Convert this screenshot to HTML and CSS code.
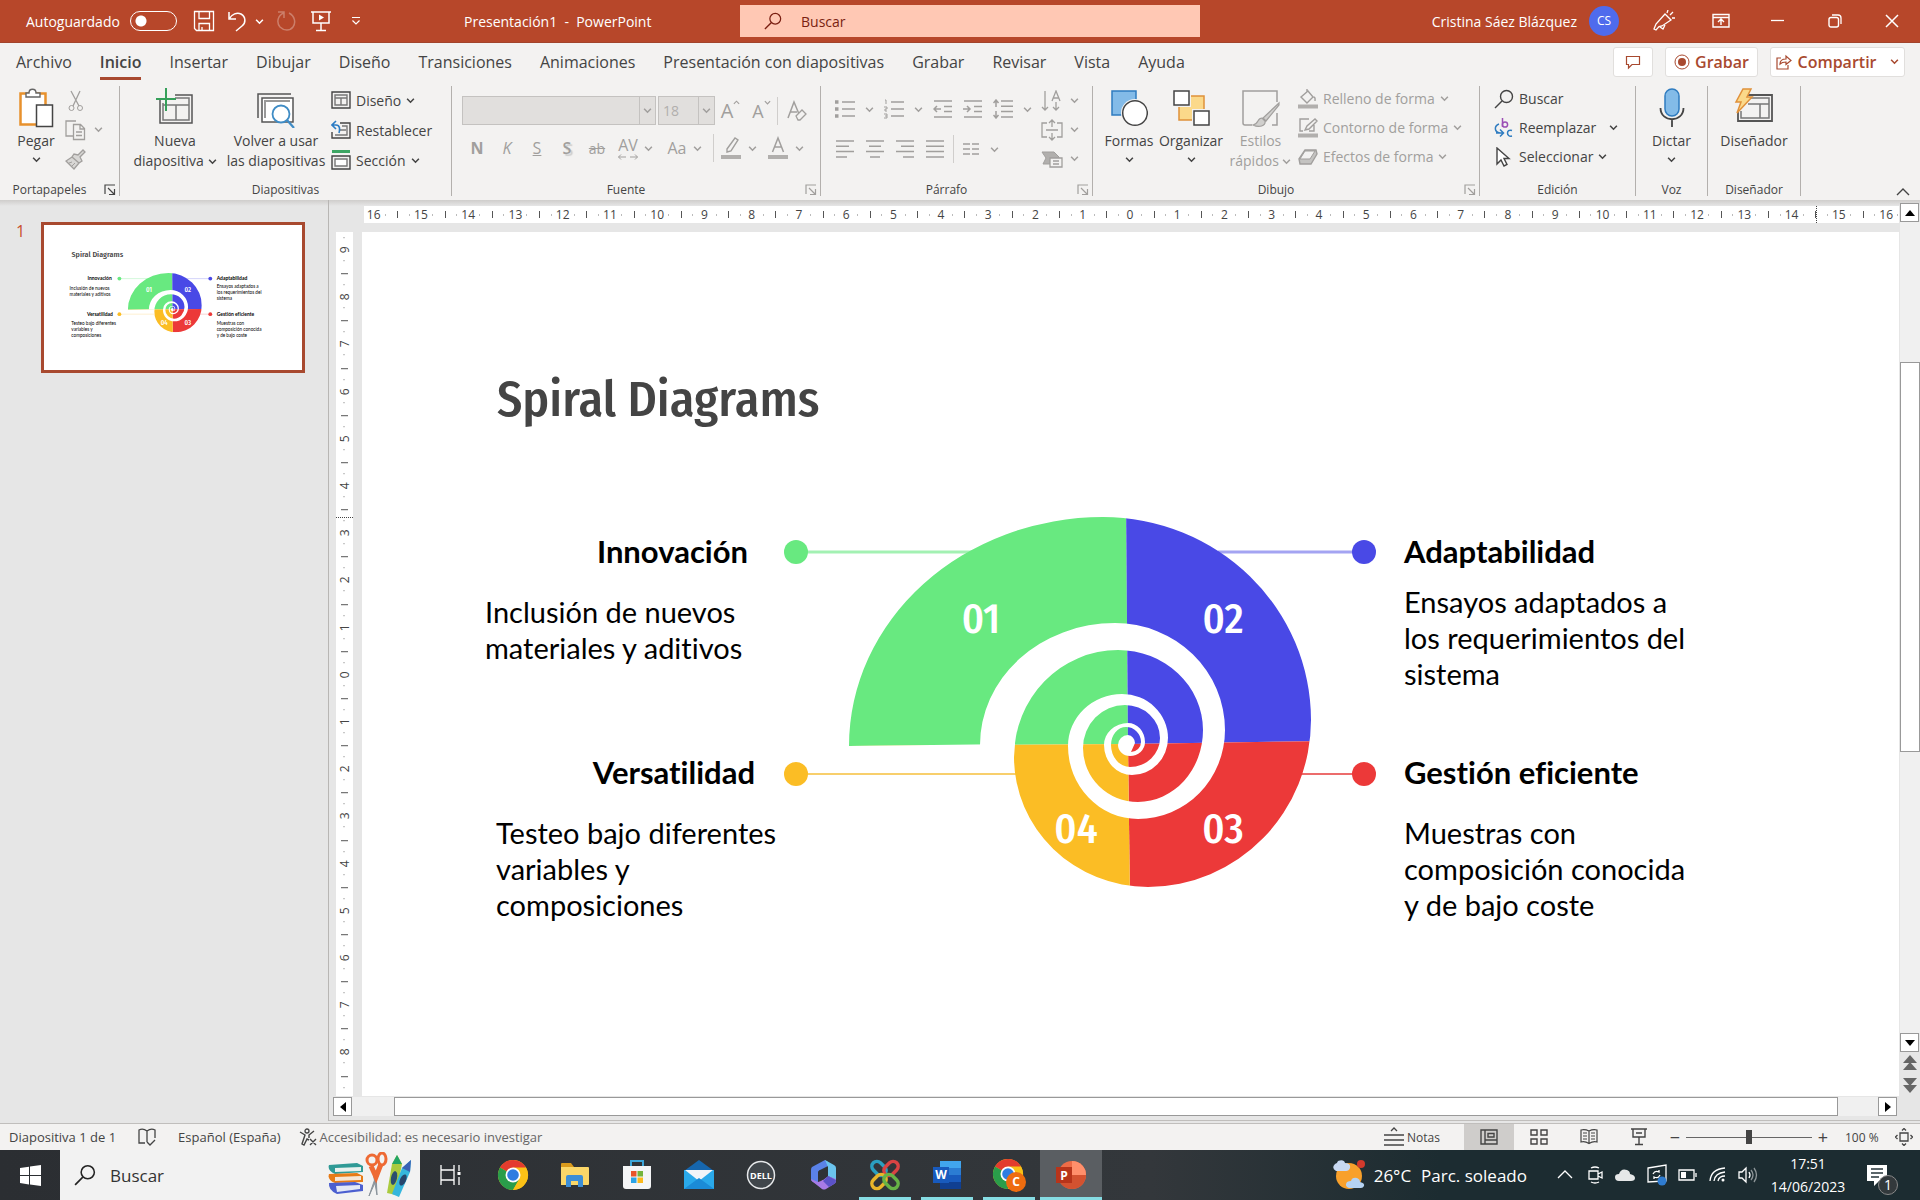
FILE: index.html
```
<!DOCTYPE html>
<html lang="es">
<head>
  <meta charset="UTF-8">
  <meta name="viewport" content="width=device-width, initial-scale=1.0">
  <title>Presentación1 - PowerPoint</title>
  <link rel="stylesheet" href="styles.css">
</head>
<body>
  <!-- Shared icons -->
  <svg class="defs" width="0" height="0">
    <symbol id="chev" viewBox="0 0 8 8"><path d="M1 2.5l3 3 3-3" fill="none" stroke="currentColor" stroke-width="1.4"/></symbol>
    <symbol id="launcher" viewBox="0 0 12 12"><path d="M1 10V1h10M4 4l6 6M10.5 5v5.5H5" fill="none" stroke="currentColor" stroke-width="1.2"/></symbol>
    <symbol id="lens" viewBox="0 0 20 20"><circle cx="12.5" cy="7.5" r="6" fill="none" stroke="currentColor" stroke-width="1.4"/><path d="M8 12l-7 7" stroke="currentColor" stroke-width="1.5"/></symbol>
    <symbol id="chrome" viewBox="0 0 32 32">
      <circle cx="16" cy="16" r="15" fill="#fbc116"/>
      <path d="M16 16L3 8.5A15 15 0 0 1 29 8.5z" fill="#e33b2e"/>
      <path d="M3 8.5A15 15 0 0 0 16 31l6.5-11.3L16 16z" fill="#2a9d4a"/>
      <path d="M16 8.5h13A15 15 0 0 1 16 31l6.5-11.3z" fill="#fbc116"/>
      <circle cx="16" cy="16" r="7.5" fill="#fff"/><circle cx="16" cy="16" r="5.8" fill="#2f7de1"/>
    </symbol>
  </svg>

  <!-- Title bar -->
  <header class="titlebar">
    <label class="autosave">Autoguardado <input type="checkbox"></label>
    <button class="qat save" aria-label="Guardar"><svg width="22" height="22" viewBox="0 0 22 22"><path d="M1.5 1.5h19v19h-17l-2-2zM6 1.5v7h10.5v-7M6 20.5v-7h10.5v7M9 17v3.5" fill="none" stroke="currentColor" stroke-width="1.3"/></svg></button>
    <button class="qat undo" aria-label="Deshacer"><svg width="20" height="22" viewBox="0 0 20 22"><path d="M2 2v7h7M2 9C5 4 10 2 14 4c5 3 5 9 1 12l-6 5" fill="none" stroke="currentColor" stroke-width="1.5"/></svg></button>
    <button class="qat undo-list" aria-label="Más acciones"><svg width="9" height="9"><use href="#chev"/></svg></button>
    <button class="qat redo" aria-label="Rehacer"><svg width="20" height="22" viewBox="0 0 20 22"><path d="M2 2h6v6M8 3c-6 2-8 9-4 14 4 4 10 4 13 0s2-11-4-14" fill="none" stroke="currentColor" stroke-width="1.5"/></svg></button>
    <button class="qat show" aria-label="Presentar"><svg width="20" height="22" viewBox="0 0 20 22"><path d="M0 2h20M2 2v11h16V2M10 13v7M5 20.5h10" fill="none" stroke="currentColor" stroke-width="1.5"/><path d="M8 4.5l5 3-5 3z" fill="currentColor"/></svg></button>
    <button class="qat more" aria-label="Personalizar"><svg width="10" height="10" viewBox="0 0 10 10"><path d="M1 1.5h8M1.5 4.5L5 8l3.5-3.5" fill="none" stroke="currentColor" stroke-width="1.2"/></svg></button>
    <span class="doc-title">Presentación1&nbsp; -&nbsp; PowerPoint</span>
    <label class="search"><svg width="18" height="18"><use href="#lens"/></svg><input type="text" placeholder="Buscar" aria-label="Buscar"></label>
    <div class="account">
      <span>Cristina Sáez Blázquez</span>
      <span class="avatar">CS</span>
    </div>
    <div class="window-buttons">
      <button aria-label="Novedades"><svg width="22" height="22" viewBox="0 0 22 22"><path d="M12 4l6 6-9 6-3 .5L3 20l-2-1 2-5zM7 17l3 2 2-4M14 3l1-3M17 5l3-3M19 8h3" fill="none" stroke="currentColor" stroke-width="1.3"/></svg></button>
      <button aria-label="Opciones de la cinta"><svg width="18" height="16" viewBox="0 0 18 16"><path d="M1 1.5h16V14H1zM1 4.5h16M9 12V6.5M6 9l3-3 3 3" fill="none" stroke="currentColor" stroke-width="1.4"/></svg></button>
      <button aria-label="Minimizar"><svg width="14" height="14" viewBox="0 0 14 14"><path d="M0 6.5h13" stroke="currentColor" stroke-width="1.3"/></svg></button>
      <button aria-label="Restaurar"><svg width="14" height="14" viewBox="0 0 14 14"><rect x="1" y="3.5" width="9.5" height="9.5" rx="2" fill="none" stroke="currentColor" stroke-width="1.4"/><path d="M4 1h6q3 0 3 3v6" fill="none" stroke="currentColor" stroke-width="1.3"/></svg></button>
      <button aria-label="Cerrar"><svg width="14" height="14" viewBox="0 0 14 14"><path d="M1 1l12 12M13 1L1 13" stroke="currentColor" stroke-width="1.5"/></svg></button>
    </div>
  </header>

  <!-- Tabs -->
  <nav class="tabs">
    <a href="#">Archivo</a>
    <a href="#" class="active">Inicio</a>
    <a href="#">Insertar</a>
    <a href="#">Dibujar</a>
    <a href="#">Diseño</a>
    <a href="#">Transiciones</a>
    <a href="#">Animaciones</a>
    <a href="#">Presentación con diapositivas</a>
    <a href="#">Grabar</a>
    <a href="#">Revisar</a>
    <a href="#">Vista</a>
    <a href="#">Ayuda</a>
    <div class="tab-buttons">
      <button class="comment" aria-label="Comentarios"><svg width="16" height="16" viewBox="0 0 16 16"><path d="M1.5 2.5h13v8H7L3.5 14v-3.5h-2z" fill="none" stroke="currentColor" stroke-width="1.2"/></svg></button>
      <button class="record"><svg width="16" height="16" viewBox="0 0 16 16"><circle cx="8" cy="8" r="7" fill="none" stroke="currentColor"/><circle cx="8" cy="8" r="4" fill="currentColor"/></svg>Grabar</button>
      <button class="share"><svg width="16" height="16" viewBox="0 0 16 16"><path d="M5 4H1v11h11v-4M4 10c0-4 3-5 6-5V2l5 4.5-5 4V8c-3 0-4 0-6 2z" fill="none" stroke="currentColor" stroke-width="1.2"/></svg>Compartir<svg class="share-arrow" width="9" height="9"><use href="#chev"/></svg></button>
    </div>
  </nav>

  <!-- Ribbon -->
  <section class="ribbon">
    <div class="group g-clip">
      <div class="tools">
        <button class="big paste"><svg width="36" height="40" viewBox="0 0 36 40"><path d="M2.5 5.5h25v31h-25z" fill="#fff" stroke="#e8912d" stroke-width="2.5"/><path d="M8 8V5h3c0-5 7-5 7 0h4v4H8z" fill="#fff" stroke="#666" stroke-width="1.4"/><path d="M18.5 17h16v21.5h-16z" fill="#fff" stroke="#444" stroke-width="1.5"/></svg><span>Pegar</span><svg width="9" height="9"><use href="#chev"/></svg></button>
        <div class="stack off">
          <button aria-label="Cortar"><svg width="22" height="22" viewBox="0 0 22 22"><path d="M6 1l8 15M15 1L8 16" stroke="currentColor" stroke-width="1.3"/><circle cx="6.5" cy="18" r="2.5" fill="none" stroke="currentColor"/><circle cx="15" cy="18" r="2.5" fill="none" stroke="currentColor"/></svg></button>
          <button aria-label="Copiar"><svg width="22" height="22" viewBox="0 0 22 22"><path d="M8 17H1V2h10M8.5 5.5h7l4 4v11h-11zM15 6v4h4M11 13h6M11 16.5h6" fill="none" stroke="currentColor" stroke-width="1.3"/></svg><svg width="9" height="9"><use href="#chev"/></svg></button>
          <button aria-label="Copiar formato"><svg width="22" height="22" viewBox="0 0 22 22"><path d="M13 7l5-5 2 2-5 5 2 4-3 2-7-6 2-3zM7 9l7 6-5 6-8-8z" fill="#d8d7d5" stroke="currentColor" stroke-width="1.3"/><path d="M4 15l3-1M7 18l3-3" stroke="currentColor"/></svg></button>
        </div>
      </div>
      <div class="group-name">Portapapeles<svg width="12" height="12"><use href="#launcher"/></svg></div>
    </div>

    <div class="group g-slides">
      <div class="tools">
        <button class="big new-slide"><svg width="40" height="40" viewBox="0 0 40 40"><path d="M5 12v23h32V7H20" fill="none" stroke="#555" stroke-width="1.5"/><path d="M8 15v17h26V10H20M8 17h26M21 17v15" fill="none" stroke="#777" stroke-width="1.5"/><path d="M11 0v23M1 11h20" stroke="#35a05a" stroke-width="2"/></svg><span>Nueva<br>diapositiva <svg width="9" height="9"><use href="#chev"/></svg></span></button>
        <button class="big reuse"><svg width="40" height="40" viewBox="0 0 40 40"><path d="M2 30V6h33" fill="none" stroke="#555" stroke-width="1.5"/><path d="M6 34V10h31v24z" fill="#fff" stroke="#555" stroke-width="1.5"/><path d="M9 30V13h25" fill="none" stroke="#999" stroke-width="2"/><circle cx="25" cy="26" r="8.5" fill="#fff" stroke="#3f8cc5" stroke-width="1.8"/><path d="M31 32l7 8" stroke="#3f8cc5" stroke-width="2.2"/></svg><span>Volver a usar<br>las diapositivas</span></button>
        <div class="rows">
          <button><svg width="20" height="20" viewBox="0 0 20 20"><path d="M1 2h18v16H1z" fill="none" stroke="#444" stroke-width="1.4"/><path d="M4 5h12v10H4zM4 8h12M10 8v7" fill="none" stroke="#777" stroke-width="1.4"/></svg>Diseño <svg width="9" height="9"><use href="#chev"/></svg></button>
          <button><svg width="20" height="20" viewBox="0 0 20 20"><path d="M9 3h10v15H1v-6" fill="none" stroke="#444" stroke-width="1.4"/><path d="M11 6h5v9H4M9 10h6" fill="none" stroke="#777" stroke-width="1.4"/><path d="M5 1L1 5l4 4M1 5h4c4 0 4 4 3 8" fill="none" stroke="#2b7cc4" stroke-width="1.6"/></svg>Restablecer</button>
          <button><svg width="20" height="20" viewBox="0 0 20 20"><path d="M1 1.5h18" stroke="#3da563" stroke-width="3"/><path d="M1 6h18v13H1z" fill="none" stroke="#444" stroke-width="1.4"/><path d="M4 9h12v7H4z" fill="#fff" stroke="#777" stroke-width="1.4"/></svg>Sección <svg width="9" height="9"><use href="#chev"/></svg></button>
        </div>
      </div>
      <div class="group-name">Diapositivas</div>
    </div>

    <div class="group g-font off">
      <div class="tools">
        <div class="font-row one">
          <span class="combo wide"><select aria-label="Fuente" disabled><option></option></select><svg width="9" height="9"><use href="#chev"/></svg></span>
          <span class="combo"><select aria-label="Tamaño" disabled><option>18</option></select><svg width="9" height="9"><use href="#chev"/></svg></span>
          <button aria-label="Aumentar tamaño" class="grow">A<svg width="7" height="7" viewBox="0 0 8 8"><path d="M1 5.5l3-3 3 3" fill="none" stroke="currentColor" stroke-width="1.3"/></svg></button>
          <button aria-label="Disminuir tamaño" class="shrink">A<svg width="7" height="7"><use href="#chev"/></svg></button>
          <i class="bar"></i>
          <button aria-label="Borrar formato"><svg width="22" height="22" viewBox="0 0 22 22"><path d="M2 18L8 2l5 12M4 12h7" fill="none" stroke="currentColor" stroke-width="1.5"/><path d="M10 16l6-6 4 4-6 6h-2z" fill="#f3f2f1" stroke="currentColor" stroke-width="1.3"/></svg></button>
        </div>
        <div class="font-row two">
          <button><b>N</b></button>
          <button><em>K</em></button>
          <button><u>S</u></button>
          <button class="shadowed">S</button>
          <button class="small"><s>ab</s></button>
          <button aria-label="Espaciado" class="spacing">AV<svg width="20" height="6" viewBox="0 0 20 6"><path d="M3 .5L.5 3 3 5.5M.5 3H8M17 .5L19.5 3 17 5.5M19.5 3H12" fill="none" stroke="currentColor"/></svg></button>
          <svg width="9" height="9"><use href="#chev"/></svg>
          <button class="case">Aa</button>
          <svg width="9" height="9"><use href="#chev"/></svg>
          <i class="bar"></i>
          <button class="ink" aria-label="Resaltado"><svg width="20" height="24" viewBox="0 0 20 24"><path d="M6 13l8-11 3 2-7 11-4 1z" fill="none" stroke="currentColor" stroke-width="1.4"/><path d="M0 19h20v4H0z" fill="#b1afad"/></svg></button>
          <svg width="9" height="9"><use href="#chev"/></svg>
          <button class="ink" aria-label="Color de fuente"><svg width="20" height="24" viewBox="0 0 20 24"><path d="M4.5 16L10 2l5.5 14M6.5 11h7" fill="none" stroke="currentColor" stroke-width="1.5"/><path d="M0 19h20v4H0z" fill="#b1afad"/></svg></button>
          <svg width="9" height="9"><use href="#chev"/></svg>
        </div>
      </div>
      <div class="group-name">Fuente<svg width="12" height="12"><use href="#launcher"/></svg></div>
    </div>

    <div class="group g-par off">
      <div class="tools">
        <div class="par-main">
          <div class="par-row one">
            <button aria-label="Viñetas"><svg width="20" height="20" viewBox="0 0 20 20"><path d="M7 3h13M7 10h13M7 17h13" stroke="currentColor" stroke-width="1.5"/><path d="M0 3h3.5M0 10h3.5M0 17h3.5" stroke="currentColor" stroke-width="3.5"/></svg></button>
            <svg width="9" height="9"><use href="#chev"/></svg>
            <button aria-label="Numeración"><svg width="20" height="20" viewBox="0 0 20 20"><path d="M7 3h13M7 10h13M7 17h13" stroke="currentColor" stroke-width="1.5"/><path d="M1 1h1v4M0 8h3v2H1v2h2M0 15h3v4H0M1 17h2" fill="none" stroke="currentColor"/></svg></button>
            <svg width="9" height="9"><use href="#chev"/></svg>
            <button aria-label="Disminuir sangría"><svg width="20" height="20" viewBox="0 0 20 20"><path d="M1 2h18M11 7.5h8M11 12.5h8M1 18h18M8 10H1M4 7l-3 3 3 3" fill="none" stroke="currentColor" stroke-width="1.5"/></svg></button>
            <button aria-label="Aumentar sangría"><svg width="20" height="20" viewBox="0 0 20 20"><path d="M1 2h18M11 7.5h8M11 12.5h8M1 18h18M0 10h7M4 7l3 3-3 3" fill="none" stroke="currentColor" stroke-width="1.5"/></svg></button>
            <button aria-label="Interlineado"><svg width="20" height="20" viewBox="0 0 20 20"><path d="M8 2h12M8 7.3h12M8 12.6h12M8 18h12M3 1v7M.5 4L3 1l2.5 3M3 19v-7M.5 16L3 19l2.5-3" fill="none" stroke="currentColor" stroke-width="1.5"/></svg></button>
            <svg width="9" height="9"><use href="#chev"/></svg>
          </div>
          <div class="par-row two">
            <button aria-label="Izquierda"><svg width="20" height="20" viewBox="0 0 20 20"><path d="M1 2h18M1 7.3h13M1 12.6h18M1 18h11" stroke="currentColor" stroke-width="1.5"/></svg></button>
            <button aria-label="Centrar"><svg width="20" height="20" viewBox="0 0 20 20"><path d="M1 2h18M4 7.3h12M1 12.6h18M5 18h10" stroke="currentColor" stroke-width="1.5"/></svg></button>
            <button aria-label="Derecha"><svg width="20" height="20" viewBox="0 0 20 20"><path d="M1 2h18M6 7.3h13M1 12.6h18M8 18h11" stroke="currentColor" stroke-width="1.5"/></svg></button>
            <button aria-label="Justificar"><svg width="20" height="20" viewBox="0 0 20 20"><path d="M1 2h18M1 7.3h18M1 12.6h18M1 18h18" stroke="currentColor" stroke-width="1.5"/></svg></button>
            <i class="bar"></i>
            <button aria-label="Columnas"><svg width="18" height="14" viewBox="0 0 18 14"><path d="M1 2h7M1 7h7M1 12h7M10 2h7M10 7h7M10 12h7" stroke="currentColor" stroke-width="1.3"/></svg></button>
            <svg width="9" height="9"><use href="#chev"/></svg>
          </div>
        </div>
        <div class="stack">
          <button aria-label="Dirección del texto"><svg width="22" height="22" viewBox="0 0 22 22"><path d="M4 1v19M1 17l3 3 3-3M15 12v8M12 17l3 3 3-3M11 11l4-10 4 10M12.5 8h5" fill="none" stroke="currentColor" stroke-width="1.3"/></svg><svg width="9" height="9"><use href="#chev"/></svg></button>
          <button aria-label="Alinear texto"><svg width="22" height="22" viewBox="0 0 22 22"><path d="M6 4H1v14h5M16 4h5v14h-5M5 11h12M11 1v7M8 4l3-3 3 3M11 21v-7M8 18l3 3 3-3" fill="none" stroke="currentColor" stroke-width="1.3"/></svg><svg width="9" height="9"><use href="#chev"/></svg></button>
          <button aria-label="SmartArt"><svg width="22" height="22" viewBox="0 0 22 22"><path d="M1 4h12l5 5v3H9v4H2l3-6z" fill="#b1afad" stroke="currentColor"/><path d="M9 10h12v9H9zM12 13h6M12 16h6" fill="#f3f2f1" stroke="currentColor" stroke-width="1.3"/></svg><svg width="9" height="9"><use href="#chev"/></svg></button>
        </div>
      </div>
      <div class="group-name">Párrafo<svg width="12" height="12"><use href="#launcher"/></svg></div>
    </div>

    <div class="group g-draw">
      <div class="tools">
        <button class="big shapes"><svg width="38" height="40" viewBox="0 0 38 40"><path d="M2 3h24v24H2z" fill="#83bbe8" stroke="#2f7cc0" stroke-width="1.5"/><circle cx="25" cy="25" r="14" fill="#f3f2f1"/><circle cx="25" cy="25" r="12.3" fill="#fff" stroke="#444" stroke-width="1.5"/></svg><span>Formas</span><svg width="9" height="9"><use href="#chev"/></svg></button>
        <button class="big arrange"><svg width="38" height="40" viewBox="0 0 38 40"><path d="M7 8h25v24H7z" fill="#fbd98a" stroke="#e0913a" stroke-width="1.5"/><path d="M2 3h15v14H2zM22 23h15v14H22z" fill="#fff" stroke="#f3f2f1" stroke-width="4"/><path d="M2 3h15v14H2zM22 23h15v14H22z" fill="#fff" stroke="#444" stroke-width="1.5"/></svg><span>Organizar</span><svg width="9" height="9"><use href="#chev"/></svg></button>
        <button class="big quick off"><svg width="38" height="40" viewBox="0 0 38 40"><path d="M10 37H3q-2 0-2-2V3h34v11M35 25v12h-5" fill="none" stroke="currentColor" stroke-width="1.5"/><path d="M37 15L21 30l3 3 13-16zM20 30c-5 0-3 6-9 7 6 3 13 1 12-4z" fill="#d0cfcd" stroke="currentColor" stroke-width="1.2"/></svg><span>Estilos<br>rápidos <svg width="9" height="9"><use href="#chev"/></svg></span></button>
        <div class="rows tight off">
          <button><svg width="20" height="20" viewBox="0 0 20 20"><path d="M3 8l7-6 5 6-6 6zM9 4V0M14 8c4-1 3 3 3 4" fill="none" stroke="currentColor" stroke-width="1.4"/><path d="M0 15.5h20v4H0z" fill="#b1afad"/></svg>Relleno de forma <svg width="9" height="9"><use href="#chev"/></svg></button>
          <button><svg width="20" height="20" viewBox="0 0 20 20"><path d="M11 1H2v12h3M16 7v6h-5M7 12l2-4 8-7 2 2-8 8z" fill="none" stroke="currentColor" stroke-width="1.4"/><path d="M0 15.5h20v4H0z" fill="#b1afad"/></svg>Contorno de forma <svg width="9" height="9"><use href="#chev"/></svg></button>
          <button><svg width="20" height="20" viewBox="0 0 20 20"><path d="M1 12L7 3h11l1 4-6 10H2z" fill="#c4c3c1" stroke="currentColor" stroke-width="1.4"/><path d="M7 4h10l-5 8H2z" fill="#f3f2f1" stroke="currentColor"/></svg>Efectos de forma <svg width="9" height="9"><use href="#chev"/></svg></button>
        </div>
      </div>
      <div class="group-name">Dibujo<svg class="off" width="12" height="12"><use href="#launcher"/></svg></div>
    </div>

    <div class="group g-edit">
      <div class="tools">
        <div class="rows tight">
          <button><svg width="20" height="20"><use href="#lens"/></svg>Buscar</button>
          <button><svg width="20" height="20" viewBox="0 0 20 20"><path d="M8.5 0v9" stroke="#9b4fb5" stroke-width="1.5"/><circle cx="11" cy="6.5" r="2.6" fill="none" stroke="#9b4fb5" stroke-width="1.5"/><path d="M18 12.5c-6-2-6 7 0 5.5M5 6c-5 2-5 8 1 9M2 15h7M6 11.5l3.5 3.5L6 18.5" fill="none" stroke="#2f7cc0" stroke-width="1.5"/></svg><span class="replace">Reemplazar</span> <svg width="9" height="9"><use href="#chev"/></svg></button>
          <button><svg width="20" height="20" viewBox="0 0 20 20"><path d="M3 1v16l4-4 3 6 3-1.5-3-6h5z" fill="#fff" stroke="#444" stroke-width="1.4"/></svg>Seleccionar <svg width="9" height="9"><use href="#chev"/></svg></button>
        </div>
      </div>
      <div class="group-name">Edición</div>
    </div>

    <div class="group g-voice">
      <div class="tools">
        <button class="big"><svg width="26" height="40" viewBox="0 0 26 40"><rect x="6" y="1" width="14" height="27" rx="7" fill="#83bbe8" stroke="#2f7cc0" stroke-width="1.5"/><path d="M1.5 20c0 15 23 15 23 0M13 32v7" fill="none" stroke="#444" stroke-width="1.8"/></svg><span>Dictar</span><svg width="9" height="9"><use href="#chev"/></svg></button>
      </div>
      <div class="group-name">Voz</div>
    </div>

    <div class="group g-designer">
      <div class="tools">
        <button class="big"><svg width="40" height="40" viewBox="0 0 40 40"><path d="M14 7h24v26H4v-9" fill="none" stroke="#555" stroke-width="1.8"/><path d="M14 10h21v20H7v-7M14 16h21M26 16v14" fill="none" stroke="#777" stroke-width="1.5"/><path d="M9 1h8l-4 8h5L3 25l4-11H2z" fill="#fbd98a" stroke="#e0913a" stroke-width="1.5"/></svg><span>Diseñador</span></button>
      </div>
      <div class="group-name">Diseñador</div>
    </div>
    <button class="collapse" aria-label="Contraer la cinta"><svg width="14" height="8" viewBox="0 0 14 8"><path d="M1 7l6-6 6 6" fill="none" stroke="#444" stroke-width="1.4"/></svg></button>
  </section>

  <!-- Workspace -->
  <main class="workspace">
    <aside class="slide-list">
      <span class="slide-number">1</span>
      <a href="#deck" class="thumb" aria-label="Diapositiva 1"><svg viewBox="325 217 1612 906"><use href="#slide"/></svg></a>
    </aside>

    <section class="editor">
      <div class="ruler-h"><div class="marks" id="rulerH"></div><i class="pointer"></i></div>
      <div class="ruler-v"><div class="marks" id="rulerV"></div><i class="pointer"></i></div>
      <div class="deck" id="deck">
        <svg viewBox="362 232 1537 864" preserveAspectRatio="xMinYMin slice">
          <g id="slide">
            <text class="s-title" x="497" y="416">Spiral Diagrams</text>
            <!-- connectors -->
            <path d="M795 552h180" stroke="#a3f1b3" stroke-width="3"/>
            <path d="M1218 552h146" stroke="#a4a4f2" stroke-width="3"/>
            <path d="M795 774h222" stroke="#f8cf6c" stroke-width="2"/>
            <path d="M1300 774h64" stroke="#ec6c6c" stroke-width="2"/>
            <circle cx="796" cy="552" r="12" fill="#68e980"/>
            <circle cx="1364" cy="552" r="12" fill="#4949e6"/>
            <circle cx="796" cy="774" r="12" fill="#fbbd25"/>
            <circle cx="1364" cy="774" r="12" fill="#ec3939"/>
            <!-- shell, split in four quadrants -->
            <clipPath id="shell"><path d="M849 746A254 229 0 0 1 1103 517A208 203 0 0 1 1311 720A163 167 0 0 1 1148 887A134 130 0 0 1 1014 757L1015 744z"/></clipPath>
            <g clip-path="url(#shell)">
              <path d="M840 500h286l2 244-288 2z" fill="#68e980"/>
              <path d="M1126 500h200v241l-198 3z" fill="#4949e6"/>
              <path d="M1128 744l198-3v160h-196z" fill="#ec3939"/>
              <path d="M1128 744l2 157h-290V746z" fill="#fbbd25"/>
            </g>
            <!-- white spiral band -->
            <path fill="#fff" d="M980 746A135 122 0 0 1 1115 623A110 107 0 0 1 1225 730A87 89 0 0 1 1138 819A70 73 0 0 1 1068 746A54 52 0 0 1 1122 694A46 44 0 0 1 1168 738A36 37 0 0 1 1132 775A28 30 0 0 1 1104 745A24 22 0 0 1 1128 723A17 19 0 0 1 1145 742A15 14 0 0 1 1130 756A12 11 0 0 1 1118 745A10 10 0 0 1 1128 735A8 8 0 0 1 1135 743L1131 752A10 10 0 0 0 1141 742A15 15 0 0 0 1126 727A15 18 0 0 0 1111 745A19 22 0 0 0 1130 767A30 29 0 0 0 1160 738A35 33 0 0 0 1125 705A42 43 0 0 0 1083 748A55 54 0 0 0 1138 802A65 72 0 0 0 1203 730A85 80 0 0 0 1118 650A104 107 0 0 0 1014 757V780H980z" clip-path="url(#band)"/>
            <clipPath id="band"><path d="M970 600h340v300h-295V745h-45z"/></clipPath>
            <text class="s-num" x="981" y="633">01</text>
            <text class="s-num" x="1223" y="633">02</text>
            <text class="s-num" x="1223" y="843">03</text>
            <text class="s-num" x="1076" y="843">04</text>
            <!-- captions -->
            <text class="s-head end" x="748" y="563">Innovación</text>
            <text class="s-text"><tspan x="485" y="623">Inclusión de nuevos</tspan><tspan x="485" y="659">materiales y aditivos</tspan></text>
            <text class="s-head" x="1404" y="563">Adaptabilidad</text>
            <text class="s-text"><tspan x="1404" y="613">Ensayos adaptados a</tspan><tspan x="1404" y="649">los requerimientos del</tspan><tspan x="1404" y="685">sistema</tspan></text>
            <text class="s-head end" x="755" y="784">Versatilidad</text>
            <text class="s-text"><tspan x="496" y="844">Testeo bajo diferentes</tspan><tspan x="496" y="880">variables y</tspan><tspan x="496" y="916">composiciones</tspan></text>
            <text class="s-head" x="1404" y="784">Gestión eficiente</text>
            <text class="s-text"><tspan x="1404" y="844">Muestras con</tspan><tspan x="1404" y="880">composición conocida</tspan><tspan x="1404" y="916">y de bajo coste</tspan></text>
          </g>
        </svg>
      </div>
      <div class="scroll-v">
        <button aria-label="Subir"><svg width="10" height="6"><path d="M0 6l5-6 5 6z"/></svg></button>
        <div class="track"><div class="handle"></div></div>
        <button aria-label="Bajar"><svg width="10" height="6"><path d="M0 0l5 6 5-6z"/></svg></button>
        <button class="page" aria-label="Diapositiva anterior"><svg width="14" height="16" viewBox="0 0 14 16"><path d="M0 8l7-8 7 8zM0 15l7-8 7 8z" fill="#666"/></svg></button>
        <button class="page" aria-label="Diapositiva siguiente"><svg width="14" height="16" viewBox="0 0 14 16"><path d="M0 1l7 8 7-8zM0 8l7 8 7-8z" fill="#666"/></svg></button>
      </div>
      <div class="scroll-h">
        <button aria-label="Izquierda"><svg width="6" height="10"><path d="M6 0L0 5l6 5z"/></svg></button>
        <div class="track"><div class="handle"></div></div>
        <button aria-label="Derecha"><svg width="6" height="10"><path d="M0 0l6 5-6 5z"/></svg></button>
      </div>
    </section>
  </main>

  <!-- Status bar -->
  <section class="status">
    <span>Diapositiva 1 de 1</span>
    <svg class="book" width="18" height="18" viewBox="0 0 18 18"><path d="M9 3Q5 0 1 2v13h6M9 3q4-3 8-1v8M9 3v11M9 14l3 3 5-5" fill="none" stroke="#444" stroke-width="1.3"/></svg>
    <span>Español (España)</span>
    <svg class="access" width="18" height="18" viewBox="0 0 18 18"><circle cx="8" cy="3" r="2" fill="none" stroke="#444" stroke-width="1.3"/><path d="M1 4l5 3-3 9 2 1 3-6 2 1M15 3l-5 4v3M11 11l6 6M17 11l-6 6" fill="none" stroke="#444" stroke-width="1.4"/></svg>
    <span class="access-text">Accesibilidad: es necesario investigar</span>
    <div class="views">
      <button class="notes"><svg width="20" height="20" viewBox="0 0 20 20"><path d="M7 4l3-3 3 3M0 8h20M0 13h20M0 18h20" fill="none" stroke="#444" stroke-width="1.3"/></svg>Notas</button>
      <button class="view active" aria-label="Normal"><svg width="18" height="16" viewBox="0 0 18 16"><path d="M1 1h16v14H1zM5 1v14M5 11h12M8 4.5h6V8H8z" fill="none" stroke="#444" stroke-width="1.4"/></svg></button>
      <button class="view" aria-label="Clasificador"><svg width="18" height="16" viewBox="0 0 18 16"><path d="M1 1h6v5H1zM11 1h6v5h-6zM1 10h6v5H1zM11 10h6v5h-6z" fill="none" stroke="#444" stroke-width="1.4"/></svg></button>
      <button class="view" aria-label="Lectura"><svg width="18" height="16" viewBox="0 0 18 16"><path d="M9 2Q5 0 1 1v12q4-1 8 1.5Q13 12 17 13V1q-4-1-8 1zv13M3 4h4M3 7h4M3 10h4M11 4h4M11 7h4M11 10h4" fill="none" stroke="#444" stroke-width="1.2"/></svg></button>
      <button class="view" aria-label="Presentación"><svg width="18" height="18" viewBox="0 0 18 18"><path d="M1 1h16M3 1v8h12V1M9 9v7M5 16.5h8M6 5h6" fill="none" stroke="#444" stroke-width="1.4"/></svg></button>
      <button class="step" aria-label="Alejar">−</button>
      <input type="range" min="0" max="100" value="50" aria-label="Zoom">
      <button class="step" aria-label="Acercar">+</button>
      <span class="percent">100 %</span>
      <button class="fit" aria-label="Ajustar"><svg width="18" height="18" viewBox="0 0 18 18"><path d="M5 5h8v8H5zM7 2.5L9 .5l2 2M7 15.5l2 2 2-2M2.5 7L.5 9l2 2M15.5 7l2 2-2 2" fill="none" stroke="#444" stroke-width="1.3"/></svg></button>
    </div>
  </section>

  <!-- Taskbar -->
  <footer class="taskbar">
    <button class="start" aria-label="Inicio"><svg width="21" height="21" viewBox="0 0 21 21"><path d="M0 3l9-1.3V10H0zM10 1.5L21 0v10H10zM0 11h9v8.5L0 18zM10 11h11v10l-11-1.5z" fill="#fff"/></svg></button>
    <label class="task-search"><svg width="22" height="22"><use href="#lens"/></svg><input type="text" placeholder="Buscar" aria-label="Buscar en Windows">
      <svg class="art" width="84" height="46" viewBox="0 0 84 46">
        <path d="M1 13l28-2 6 3v6l-28 2q-8-4-6-9z" fill="#2f9a96"/><path d="M7 16l26-1v4l-26 1z" fill="#e9f1ee"/>
        <path d="M1 22l28-1 6 3v6l-28 1q-8-3-6-9z" fill="#e77b16"/><path d="M7 25l26-1v4l-26 1z" fill="#f7e7d6"/>
        <path d="M1 31l26-1 8 3v6l-26 3q-9-4-8-11z" fill="#4c5fd0"/><path d="M8 34l24-1v4l-23 3z" fill="#e4e9f6"/>
        <path d="M50 18L41 44l9-20zM45 20l4 23-1-22z" fill="#9aa3ab" stroke="#8a939b"/>
        <circle cx="44" cy="8" r="5" fill="none" stroke="#ee6a34" stroke-width="3"/><ellipse cx="54" cy="7" rx="4" ry="6" fill="none" stroke="#ee6a34" stroke-width="3"/>
        <path d="M43 14l5 11 5-13" fill="none" stroke="#ee6a34" stroke-width="5"/>
        <path d="M64 12l5-9 5 9-6 31-9-2z" fill="#aacb3e"/><path d="M64 12l5-9 5 9z" fill="#22a565"/><ellipse cx="66" cy="26" rx="3" ry="7" fill="#2b4d6e" transform="rotate(12 66 26)"/>
        <path d="M74 16l9-8-1 12-11 25-7-3z" fill="#35b6dd"/><path d="M74 16l9-8-1 12z" fill="#3a62b4"/><ellipse cx="75" cy="28" rx="3" ry="6" fill="#27456c" transform="rotate(25 75 28)"/>
      </svg>
    </label>
    <div class="apps">
      <button aria-label="Vista de tareas"><svg width="22" height="22" viewBox="0 0 22 22"><path d="M1 1v5h13V1M1 21v-5h13v5M1 6v10M14 6v10M19 1v6M19 13v8" fill="none" stroke="#fff" stroke-width="1.3"/><path d="M17.5 8h3v3h-3z" fill="#fff"/></svg></button>
      <button aria-label="Chrome"><svg width="32" height="32"><use href="#chrome"/></svg></button>
      <button aria-label="Explorador"><svg width="30" height="26" viewBox="0 0 30 26"><path d="M1 2q0-1 1-1h9l3 4H1z" fill="#d99a1c"/><path d="M1 5h27q1 0 1 1v16q0 1-1 1H1z" fill="#fbd768"/><path d="M6 25V15q0-2 2-2h13q2 0 2 2v10h-5v-6h-7v6z" fill="#3c8ed6"/></svg></button>
      <button aria-label="Store"><svg width="30" height="32" viewBox="0 0 30 32"><path d="M9 8V2h12v6" fill="none" stroke="#3ba5d8" stroke-width="2"/><path d="M1 7h28v20q0 3-3 3H4q-3 0-3-3z" fill="#f4f5f6"/><path d="M9 12h5.5v5.5H9z" fill="#e9542b"/><path d="M15.5 12H21v5.5h-5.5z" fill="#74b43b"/><path d="M9 18.5h5.5V24H9z" fill="#2ba3e6"/><path d="M15.5 18.5H21V24h-5.5z" fill="#fbb91c"/></svg></button>
      <button aria-label="Correo"><svg width="32" height="30" viewBox="0 0 32 30"><path d="M1 11L16 0l15 11z" fill="#1666ae"/><path d="M1 10h30v19H1z" fill="#2aa9ea"/><path d="M2 10h28L16 21z" fill="#f2f5f8"/><path d="M1 29l15-11 15 11z" fill="#1b8bd6"/></svg></button>
      <button aria-label="Dell"><svg width="30" height="30" viewBox="0 0 30 30"><circle cx="15" cy="15" r="13.5" fill="#40464b" stroke="#e6e8ea" stroke-width="1.5"/><text x="15" y="18.5" text-anchor="middle" class="dell">DELL</text></svg></button>
      <button aria-label="Microsoft 365"><svg width="30" height="32" viewBox="0 0 30 32"><path d="M17 1L4 8q-1 1-1 3v9q0 2 2 3l5 2V14q0-2 2-3l8-4V3z" fill="#5a82e8"/><path d="M17 1l9 5q2 1 2 3v12l-8-4V8z" fill="#6bc4ee"/><path d="M3 20q0 2 2 3l9 7q2 1 4 0l8-5q2-1 2-3v-2l-8-3-7 5-3 1z" fill="#a77be6"/><path d="M20 17l8 4q0 3-2 4l-5 3-6-6z" fill="#5b53c8"/><path d="M15 11l5-3v9l-5 4-5-2v-5q0-2 2-3z" fill="#2e3236"/></svg></button>
      <button class="open" aria-label="Anillos"><svg width="32" height="32" viewBox="0 0 32 32" fill="none" stroke-width="3.5"><rect x="5" y="1.5" width="10" height="16" rx="5" stroke="#2b9fbf" transform="rotate(-45 10 9.5)"/><rect x="17" y="1.5" width="10" height="16" rx="5" stroke="#d94343" transform="rotate(45 22 9.5)"/><rect x="5" y="14.5" width="10" height="16" rx="5" stroke="#e9b62a" transform="rotate(45 10 22.5)"/><rect x="17" y="14.5" width="10" height="16" rx="5" stroke="#67b346" transform="rotate(-45 22 22.5)"/></svg></button>
      <button class="open" aria-label="Word"><svg width="30" height="30" viewBox="0 0 30 30"><path d="M8 1h21v28H8z" fill="#2b7cd3"/><path d="M8 1h21v7H8z" fill="#41a5ee"/><path d="M8 15h21v7H8z" fill="#185abd"/><path d="M8 22h21v7H8z" fill="#103f91"/><path d="M1 7h16v16H1z" fill="#185abd"/><text x="9" y="19" text-anchor="middle" class="letter">W</text></svg></button>
      <button class="open" aria-label="Chrome, perfil C"><svg width="34" height="34" viewBox="0 0 34 34"><use href="#chrome" width="32" height="32"/><circle cx="24" cy="24" r="10" fill="#ee6c0f"/><text x="24" y="28" text-anchor="middle" class="letter">C</text></svg></button>
      <button class="open current" aria-label="PowerPoint"><svg width="32" height="30" viewBox="0 0 32 30"><circle cx="17" cy="15" r="14" fill="#ed6c47"/><path d="M17 1a14 14 0 0 1 14 14H17z" fill="#ff8f6b"/><path d="M31 15a14 14 0 0 1-28 0z" fill="#d35230"/><path d="M1 7h16v16H1z" fill="#b7341a"/><text x="9" y="20" text-anchor="middle" class="letter">P</text></svg></button>
    </div>
    <div class="weather"><svg width="34" height="32" viewBox="0 0 34 32"><circle cx="17" cy="17" r="13" fill="#f8a02b"/><circle cx="29" cy="5" r="4" fill="#d23a2c"/><path d="M4 12q-5-3-1-7 2 0 3-3 6-2 7 2 6 0 5 5-1 3-4 3z" fill="#c9d9f2"/><path d="M17 29q-5-2-2-6 2-1 4-1 1-4 6-3 3 1 3 4 5 1 4 4-1 2-3 2z" fill="#b5d2f2"/></svg><span>26°C</span><span>Parc. soleado</span></div>
    <div class="tray">
      <svg width="18" height="18" viewBox="0 0 18 18"><path d="M2 12l7-7 7 7"/></svg>
      <svg width="18" height="18" viewBox="0 0 18 18"><path d="M6 2q4-2 8 0M6 16q4 2 8 0M4 5h9v8H4zM13 8l4-2v6l-4-2"/></svg>
      <svg width="22" height="18" viewBox="0 0 22 18"><path d="M5 15q-4 0-4-4 0-3 4-3 2-6 8-4 3 1 3 4 5 1 5 4t-4 3z" fill="#e6e8e8" stroke="none"/></svg>
      <svg width="20" height="22" viewBox="0 0 20 22"><path d="M1 4l18-3v16l-18 1zM6 10q2-4 6-2V6M13 11q-2 4-6 2v2"/><circle cx="15" cy="17" r="4.5" fill="#2f7cd0" stroke="none"/></svg>
      <svg width="20" height="18" viewBox="0 0 20 18"><path d="M1 4h15v10H1zM18 7v4"/><path d="M3 6h5v6H3z" fill="#fff" stroke="none"/></svg>
      <svg width="18" height="18" viewBox="0 0 18 18"><path d="M1 15Q2 3 16 2M5 15Q6 7 16 6M9 15q1-5 7-5"/><circle cx="14" cy="14" r="1.5" fill="#fff" stroke="none"/></svg>
      <svg width="20" height="18" viewBox="0 0 20 18"><path d="M1 6h3l4-4v14l-4-4H1zM11 6q2 3 0 6"/><path d="M13 4q4 5 0 10M16 2q5 7 0 14" opacity=".5"/></svg>
    </div>
    <div class="clock"><time>17:51</time><time>14/06/2023</time></div>
    <button class="notice" aria-label="Notificaciones"><svg width="22" height="22" viewBox="0 0 22 22"><path d="M0 1h20v16h-8l-5 5v-5H0z" fill="#fff"/><path d="M4 5h12M4 9h12M4 13h8" stroke="#26343a" stroke-width="1.5"/></svg><span class="count">1</span></button>
  </footer>

  <script>
    // Ruler marks
    function addMarks(id, from, to) {
      const ruler = document.getElementById(id);
      for (let i = from; i <= to; i++) {
        const mark = document.createElement("span");
        mark.textContent = Math.abs(i);
        ruler.appendChild(mark);
      }
    }
    addMarks("rulerH", -16, 16);
    addMarks("rulerV", -9, 8);
    document.getElementById("rulerV").appendChild(document.createElement("span"));
  </script>
</body>
</html>
```
FILE: styles.css
```
* {
  box-sizing: border-box;
}
body {
  margin: 0;
  height: 100vh;
  display: flex;
  flex-direction: column;
  overflow: hidden;
  font-family: "Open Sans", sans-serif;
  font-size: 14px;
  color: #444;
  background-color: #e6e6e6;
}
button {
  font: inherit;
  color: inherit;
  background: none;
  border: none;
  padding: 0;
  display: flex;
  align-items: center;
  justify-content: center;
  cursor: pointer;
}
input {
  font: inherit;
  border: none;
  background: none;
  outline: none;
  padding: 0;
}
svg {
  flex: none;
}
.defs {
  position: absolute;
}

/* Title bar */
.titlebar {
  flex: none;
  display: flex;
  align-items: center;
  height: 43px;
  background-color: #b7472a;
  border-bottom: 1px solid #a2442c;
  color: #fff;
}
.autosave {
  display: flex;
  align-items: center;
  gap: 10px;
  width: 152px;
  margin-left: 26px;
  white-space: nowrap;
}
.autosave input {
  appearance: none;
  flex: none;
  width: 47px;
  height: 20px;
  margin: 0;
  border: 1px solid #fff;
  border-radius: 10px;
  background: radial-gradient(circle at 10px 9px, #fff 5px, transparent 6px);
}
.qat {
  margin-left: 12px;
}
.save {
  margin-left: 15px;
}
.undo-list {
  margin-left: 8px;
}
.redo {
  opacity: 0.3;
}
.show {
  margin-left: 15px;
}
.more {
  margin-left: 20px;
}
.doc-title {
  width: 276px;
  margin-left: 103px;
  white-space: nowrap;
}
.search {
  display: flex;
  align-items: center;
  gap: 19px;
  flex: 1 1 460px;
  max-width: 460px;
  height: 32px;
  padding-left: 24px;
  background-color: #ffc8b4;
  color: #7a1f12;
}
.search input::placeholder {
  color: #7a1f12;
  opacity: 1;
}
.account {
  display: flex;
  align-items: center;
  gap: 12px;
  margin-left: auto;
  white-space: nowrap;
}
.avatar {
  width: 30px;
  height: 30px;
  line-height: 30px;
  border-radius: 50%;
  background-color: #4f6bed;
  font-size: 12px;
  text-align: center;
}
.window-buttons {
  display: flex;
  margin-left: 16px;
}
.window-buttons button {
  width: 57px;
  height: 40px;
}

/* Tabs */
.tabs {
  flex: none;
  display: flex;
  align-items: center;
  gap: 28px;
  height: 37px;
  padding-left: 16px;
  background-color: #f3f2f1;
  font-size: 16px;
}
.tabs a {
  color: #444;
  text-decoration: none;
  line-height: 30px;
  border-bottom: 4px solid transparent;
  margin-top: 4px;
  white-space: nowrap;
}
.tabs .active {
  font-weight: 600;
  border-color: #a8492f;
}
.tab-buttons {
  display: flex;
  gap: 12px;
  margin-left: auto;
  margin-right: 15px;
}
.tab-buttons button {
  gap: 5px;
  height: 30px;
  background-color: #fff;
  border: 1px solid #e1dfdd;
  border-radius: 3px;
  color: #a8492f;
  font-weight: 600;
}
.comment {
  width: 40px;
}
.record {
  width: 93px;
}
.share {
  width: 135px;
}
.share-arrow {
  margin-left: 8px;
}

/* Ribbon */
.ribbon {
  flex: none;
  display: flex;
  height: 120px;
  padding-top: 6px;
  background-color: #f3f2f1;
}
.group {
  flex: none;
  display: flex;
  flex-direction: column;
  height: 110px;
  border-right: 1px solid #b3b0ad;
}
.tools {
  display: flex;
  height: 95px;
}
.group-name {
  position: relative;
  margin-top: auto;
  font-size: 12px;
  line-height: 12px;
  text-align: center;
  color: #444;
}
.group-name svg {
  position: absolute;
  right: 3px;
  top: 0;
}
.off,
.off .group-name svg {
  color: #a19f9d;
}
.g-clip {
  width: 120px;
}
.g-slides {
  width: 332px;
}
.g-font {
  width: 369px;
}
.g-par {
  width: 272px;
}
.g-draw {
  width: 387px;
}
.g-clip .group-name,
.g-font .group-name,
.g-par .group-name,
.g-draw .group-name {
  padding-right: 20px;
}
.g-edit {
  width: 156px;
}
.g-voice {
  width: 72px;
}
.g-designer {
  width: 93px;
}
.big {
  flex-direction: column;
  justify-content: flex-start;
  line-height: 20px;
  white-space: nowrap;
}
.big > svg:first-child {
  margin: 2px 0 3px;
}
.big > svg:last-child {
  margin-top: 4px;
}
.g-voice .big,
.g-designer .big {
  width: 100%;
}
.paste {
  width: 56px;
  margin-left: 8px;
}
.new-slide {
  width: 92px;
  margin-left: 9px;
}
.reuse {
  width: 110px;
}
.shapes {
  width: 60px;
  margin-left: 6px;
}
.arrange {
  width: 64px;
}
.quick {
  width: 75px;
}
.stack {
  display: flex;
  flex-direction: column;
}
.g-clip .stack {
  margin-left: 1px;
}
.stack button {
  height: 29px;
  gap: 7px;
  justify-content: flex-start;
}
.rows {
  display: flex;
  flex-direction: column;
  margin-top: -1px;
  white-space: nowrap;
}
.rows button {
  height: 30px;
  justify-content: flex-start;
  gap: 5px;
}
.rows.tight {
  margin-top: -2px;
}
.rows.tight button {
  height: 29px;
}
.g-edit .rows {
  margin-left: 14px;
}
.replace {
  margin-right: 8px;
}
.bar {
  width: 1px;
  height: 28px;
  background-color: #d0cecc;
}
.g-font .tools {
  flex-direction: column;
  padding: 10px 0 0 10px;
}
.font-row {
  display: flex;
  align-items: center;
  height: 29px;
}
.font-row.two {
  height: 28px;
  margin-top: 9px;
  font-size: 16px;
}
.combo {
  position: relative;
  width: 57px;
  height: 29px;
}
.combo.wide {
  width: 194px;
  margin-right: 2px;
}
.combo select {
  appearance: none;
  width: 100%;
  height: 100%;
  padding: 0 4px;
  border: 1px solid #c4c2c0;
  border-radius: 0;
  background-color: #e1dfdd;
  color: #b1afad;
  font: inherit;
  opacity: 1;
}
.combo svg {
  position: absolute;
  right: 1px;
  top: 1px;
  width: 16px;
  height: 27px;
  padding: 9px 3px;
  border-left: 1px solid #c4c2c0;
}
.grow,
.shrink {
  width: 31px;
  align-items: flex-start;
  line-height: 24px;
  font-size: 20px;
}
.shrink {
  font-size: 18px;
}
.font-row.one .bar {
  margin: 0 8px 0 0;
}
.font-row.two button {
  width: 30px;
}
.font-row.two > svg {
  margin-right: 4px;
}
.font-row.two .spacing,
.font-row.two .case {
  width: 26px;
  margin: 0 3px;
}
.font-row.two .case,
.font-row.two .bar {
  margin-left: 7px;
}
.font-row.two .ink {
  width: 20px;
  margin: 0 7px;
}
.shadowed {
  text-shadow: 2px 2px 1px #ccc;
  font-weight: 600;
}
.small {
  font-size: 14px;
}
.spacing {
  flex-direction: column;
  line-height: 18px;
}
.par-main {
  width: 206px;
  margin-left: 14px;
  padding-top: 11px;
}
.par-row {
  display: flex;
  align-items: center;
  gap: 10px;
  height: 24px;
}
.par-row.two {
  margin-top: 16px;
}
.par-row .bar {
  margin: 0 -2px;
}
.collapse {
  align-self: flex-end;
  margin: 0 10px 4px auto;
}

/* Workspace */
.workspace {
  flex: 1;
  min-height: 0;
  display: flex;
  background: linear-gradient(#cfcdcb, #e6e6e6 6px);
}
.slide-list {
  flex: none;
  display: flex;
  align-items: flex-start;
  width: 329px;
  padding: 22px 0 0 16px;
  border-right: 1px solid #b8b6b4;
}
.slide-number {
  width: 25px;
  line-height: 18px;
  font-size: 16px;
  color: #c9502f;
}
.thumb {
  width: 264px;
  border: 3px solid #a8492f;
  background-color: #fff;
}
.thumb svg {
  display: block;
  width: 100%;
}
.editor {
  flex: 1;
  min-width: 0;
  display: grid;
  grid-template-columns: 24px 9px 1fr 21px;
  grid-template-rows: 6px 17px 9px 1fr 24px;
  border-bottom: 1px solid #c0bebc;
}
.ruler-h {
  grid-area: 2 / 3;
  position: relative;
  margin-left: 2px;
  overflow: hidden;
  background-color: #fff;
}
.ruler-v {
  grid-area: 4 / 1;
  position: relative;
  width: 17px;
  margin-left: 7px;
  overflow: hidden;
  background-color: #fff;
}
.marks {
  display: flex;
  font-size: 12px;
  line-height: 17px;
}
.marks span {
  flex: 1;
  text-align: center;
}
.ruler-h .marks {
  margin: 0 -11px 0 -14px;
}
.ruler-h span {
  background: linear-gradient(#555, #555) 0 50% / 1px 7px no-repeat,
    linear-gradient(#bbb, #bbb) 25% 50% / 1px 2px no-repeat,
    linear-gradient(#bbb, #bbb) 75% 50% / 1px 2px no-repeat;
}
.ruler-v .marks {
  flex-direction: column;
  position: absolute;
  inset: -6px 0 -27px;
}
.ruler-v span {
  writing-mode: vertical-rl;
  transform: rotate(180deg);
  background: linear-gradient(#555, #555) 50% 100% / 7px 1px no-repeat,
    linear-gradient(#bbb, #bbb) 50% 25% / 2px 1px no-repeat,
    linear-gradient(#bbb, #bbb) 50% 75% / 2px 1px no-repeat;
}
.pointer {
  position: absolute;
}
.ruler-h .pointer {
  right: 82px;
  top: 0;
  height: 17px;
  border-left: 1px dotted #444;
}
.ruler-v .pointer {
  left: 0;
  top: 33%;
  width: 17px;
  border-top: 1px dotted #444;
}
.deck {
  grid-area: 4 / 3;
  min-height: 0;
  overflow: hidden;
  background-color: #fff;
}
.deck svg {
  display: block;
  width: 100%;
  height: 100%;
}
.s-title {
  font: 500 50px "Fira Sans Condensed", "Liberation Sans Narrow", "Open Sans", sans-serif;
  fill: #444;
}
.s-num {
  font: 500 42px "Fira Sans Condensed", "Liberation Sans Narrow", "Open Sans", sans-serif;
  fill: #fff;
  text-anchor: middle;
}
.s-head {
  font: 700 31px Lato, sans-serif;
  font-variant-ligatures: none;
}
.s-text {
  font: 400 29px Lato, sans-serif;
  font-variant-ligatures: none;
}
.end {
  text-anchor: end;
}
.scroll-v {
  grid-area: 1 / 4 / 5 / 5;
  display: flex;
  flex-direction: column;
  padding: 3px 0 0 1px;
}
.scroll-v button,
.scroll-h button {
  flex: none;
  width: 19px;
  height: 19px;
  border: 1px solid #999;
  background-color: #fff;
}
.scroll-v .page {
  height: 22px;
  border: none;
  background: none;
}
.track {
  flex: 1;
  display: flex;
  background-color: #f0f0f0;
}
.scroll-v .track {
  flex-direction: column;
  padding: 140px 0 281px;
}
.handle {
  flex: 1;
  border: 1px solid #999;
  background-color: #fff;
}
.scroll-h {
  grid-area: 5 / 1 / 6 / 4;
  display: flex;
  height: 19px;
  margin: 1px 2px 0 4px;
}
.scroll-h .track {
  padding: 0 40px 0 42px;
}

/* Status bar */
.status {
  flex: none;
  display: flex;
  align-items: center;
  height: 27px;
  margin-top: 2px;
  padding-left: 9px;
  border-top: 1px solid #c0bebc;
  background-color: #f3f2f1;
  font-size: 13px;
  white-space: nowrap;
}
.book {
  margin: 0 22px 0 22px;
}
.access {
  margin: 0 3px 0 18px;
}
.access-text {
  color: #666;
}
.views {
  display: flex;
  align-items: center;
  margin-left: auto;
  font-size: 12px;
}
.notes {
  gap: 3px;
  margin-right: 24px;
}
.view {
  width: 50px;
  height: 26px;
}
.view.active {
  background-color: #cfcdcb;
}
.step {
  width: 22px;
  font-size: 18px;
  line-height: 20px;
}
.status input {
  appearance: none;
  width: 126px;
  height: 14px;
  margin: 0;
  background: linear-gradient(#666, #666) 0 50% / 100% 1px no-repeat;
}
.status input::-webkit-slider-thumb {
  appearance: none;
  width: 6px;
  height: 14px;
  background-color: #444;
}
.percent {
  width: 50px;
  margin-left: 11px;
}
.fit {
  margin-right: 7px;
}

/* Taskbar */
.taskbar {
  flex: none;
  display: flex;
  align-items: stretch;
  height: 50px;
  background: linear-gradient(90deg, #2b2e32, #33373b 60%, #1c2c31 75%);
  color: #fff;
  font-size: 17px;
}
.start {
  width: 60px;
}
.task-search {
  display: flex;
  align-items: center;
  width: 360px;
  padding: 0 8px 0 14px;
  background-color: #f2f2f2;
  color: #222;
}
.task-search input {
  flex: 1;
  min-width: 0;
  margin-left: 14px;
}
.task-search input::placeholder {
  color: #333;
  opacity: 1;
}
.apps {
  display: flex;
}
.apps button {
  width: 62px;
  border-bottom: 3px solid transparent;
  padding-top: 3px;
}
.apps .open {
  border-image: linear-gradient(90deg, transparent 5px, #86dce3 5px, #86dce3 57px, transparent 57px) 0 0 3;
}
.apps .current {
  background-color: #5a5e62;
  border-image: none;
  border-color: #86dce3;
}
.letter {
  font: 700 12px "Open Sans", sans-serif;
  fill: #fff;
}
.dell {
  font: 700 9px "Open Sans", sans-serif;
  fill: #fff;
}
.weather {
  display: flex;
  align-items: center;
  gap: 8px;
  margin-left: auto;
  margin-right: 29px;
  white-space: nowrap;
}
.weather span:last-child {
  margin-left: 2px;
}
.tray {
  display: flex;
  align-items: center;
  gap: 11px;
  margin-right: 11px;
}
.tray svg {
  fill: none;
  stroke: #fff;
  stroke-width: 1.3;
}
.clock {
  display: flex;
  flex-direction: column;
  align-items: center;
  justify-content: center;
  width: 78px;
  margin-right: 8px;
  font-size: 14px;
  line-height: 23px;
}
.notice {
  position: relative;
  width: 46px;
  margin-right: 19px;
}
.count {
  position: absolute;
  left: 23px;
  top: 25px;
  width: 20px;
  height: 20px;
  border: 1px solid #888;
  border-radius: 50%;
  background-color: #33393c;
  font-size: 14px;
  line-height: 18px;
}
```
